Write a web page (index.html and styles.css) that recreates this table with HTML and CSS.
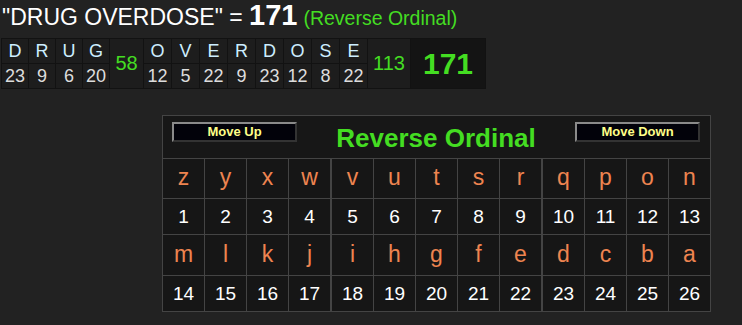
FILE: index.html
```html
<!DOCTYPE html>
<html>
<head>
<meta charset="utf-8">
<link rel="stylesheet" href="styles.css">
</head>
<body>
<div class="title"><span class="phrase">"DRUG OVERDOSE" = </span><span class="total">171</span><span class="cipher">(Reverse Ordinal)</span></div>

<table class="breakdown">
  <tr>
    <td class="bl">D</td><td class="bl">R</td><td class="bl">U</td><td class="bl">G</td>
    <td class="wsum w58" rowspan="2">58</td>
    <td class="bl w2">O</td><td class="bl w2">V</td><td class="bl w2">E</td><td class="bl w2">R</td><td class="bl w2">D</td><td class="bl w2">O</td><td class="bl w2">S</td><td class="bl w2">E</td>
    <td class="wsum w113" rowspan="2">113</td>
    <td class="gsum" rowspan="2">171</td>
  </tr>
  <tr>
    <td class="bn">23</td><td class="bn">9</td><td class="bn">6</td><td class="bn">20</td>
    <td class="bn">12</td><td class="bn">5</td><td class="bn">22</td><td class="bn">9</td><td class="bn">23</td><td class="bn">12</td><td class="bn">8</td><td class="bn">22</td>
  </tr>
</table>

<div class="chart">
  <div class="head">
    <div class="btn">Move Up</div>
    <div class="cname">Reverse Ordinal</div>
    <div class="btn">Move Down</div>
  </div>
  <div class="c l">z</div><div class="c l">y</div><div class="c l">x</div><div class="c l t">w</div><div class="c l">v</div><div class="c l">u</div><div class="c l">t</div><div class="c l">s</div><div class="c l t">r</div><div class="c l">q</div><div class="c l">p</div><div class="c l">o</div><div class="c l">n</div>
  <div class="c n">1</div><div class="c n">2</div><div class="c n">3</div><div class="c n t">4</div><div class="c n">5</div><div class="c n">6</div><div class="c n">7</div><div class="c n">8</div><div class="c n t">9</div><div class="c n">10</div><div class="c n">11</div><div class="c n">12</div><div class="c n">13</div>
  <div class="c l">m</div><div class="c l">l</div><div class="c l">k</div><div class="c l t">j</div><div class="c l">i</div><div class="c l">h</div><div class="c l">g</div><div class="c l">f</div><div class="c l t">e</div><div class="c l">d</div><div class="c l">c</div><div class="c l">b</div><div class="c l">a</div>
  <div class="c n">14</div><div class="c n">15</div><div class="c n">16</div><div class="c n t">17</div><div class="c n">18</div><div class="c n">19</div><div class="c n">20</div><div class="c n">21</div><div class="c n t">22</div><div class="c n">23</div><div class="c n">24</div><div class="c n">25</div><div class="c n">26</div>
</div>
</body>
</html>
```

FILE: styles.css
```css
html, body {
  margin: 0;
  padding: 0;
  background: #222222;
  font-family: "Liberation Sans", Arial, sans-serif;
}

.title {
  height: 38px;
  padding-left: 2px;
  display: flex;
  align-items: baseline;
  white-space: pre;
  color: #ffffff;
  line-height: 30px;
}

.phrase {
  font-size: 23px;
}

.total {
  font-size: 29px;
  font-weight: bold;
}

.cipher {
  font-size: 19.5px;
  color: #44dd22;
  margin-left: 6px;
}

.breakdown {
  margin-left: 1px;
  border-collapse: separate;
  border-spacing: 1px;
  background: #121212;
}

.breakdown td {
  padding: 0;
  text-align: center;
  background: #1d1d1d;
}

.bl {
  width: 26px;
  height: 24px;
  font-size: 18px;
  color: #cdeeff;
}

.bl.w2 {
  width: 27px;
}

.bn {
  height: 24px;
  font-size: 18px;
  color: #dddddd;
}

.wsum {
  color: #44dd22;
  font-size: 20px;
}

.w58 { width: 33px; }
.w113 { width: 42px; }

.breakdown td.gsum {
  width: 74px;
  background: #141414;
  color: #44dd22;
  font-size: 30px;
  font-weight: bold;
}

.chart {
  margin-left: 162px;
  margin-top: 26px;
  width: 549px;
  box-sizing: border-box;
  border: 1px solid #444444;
  background: #444444;
  display: grid;
  grid-template-columns: 41px 41px 41px 42px 41px 41px 41px 41px 42px 41px 41px 41px 41px;
  grid-template-rows: 42px 39px 35px 40px 35px;
  gap: 1px;
}

.head {
  grid-column: 1 / -1;
  background: #171717;
  display: flex;
  justify-content: space-between;
  align-items: flex-start;
  padding: 0 10px 0 9px;
}

.btn {
  margin-top: 6px;
  width: 125px;
  height: 20px;
  box-sizing: border-box;
  background: #02020a;
  border: 2px solid;
  border-color: #8a8a8a #333333 #333333 #8a8a8a;
  color: #ffff88;
  font-size: 13px;
  font-weight: bold;
  text-align: center;
  line-height: 16px;
}

.cname {
  align-self: center;
  color: #44dd22;
  font-size: 26px;
  font-weight: bold;
  line-height: 30px;
  margin-top: 2px;
}

.c {
  background: #161616;
  display: flex;
  align-items: center;
  justify-content: center;
  box-sizing: border-box;
}

.c.t {
  border-right: 1px solid #444444;
}

.l {
  color: #ee8450;
  font-size: 23px;
  padding-bottom: 2px;
}

.n {
  color: #ffffff;
  font-size: 19px;
}
```
